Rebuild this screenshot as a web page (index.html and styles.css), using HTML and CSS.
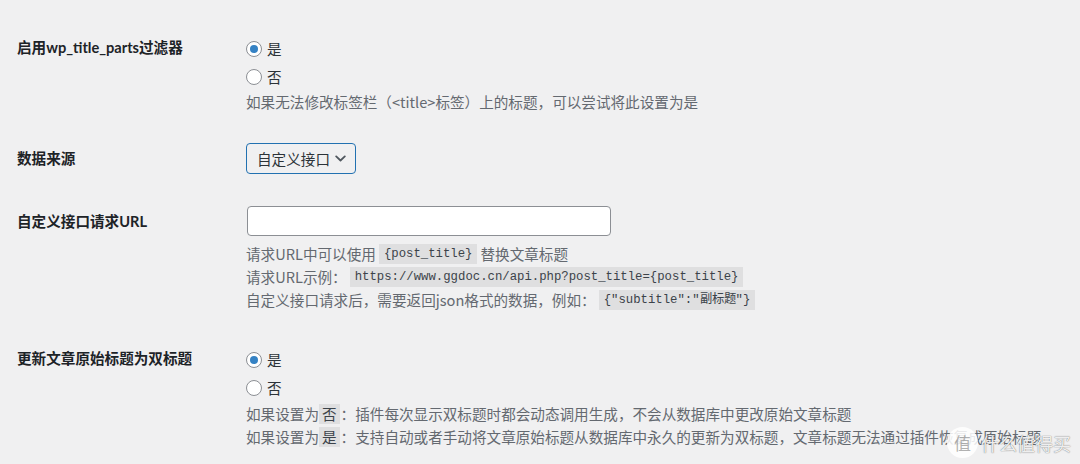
FILE: index.html
```html
<!DOCTYPE html>
<html lang="zh-CN">
<head>
<meta charset="utf-8">
<title>设置</title>
<link rel="stylesheet" href="styles.css">
</head>
<body>
<div class="form">
  <div class="row row-1">
    <div class="label">启用wp_title_parts过滤器</div>
    <div class="field">
      <label class="radio-line"><span class="radio checked"></span><span>是</span></label>
      <label class="radio-line"><span class="radio"></span><span>否</span></label>
      <p class="desc desc-first">如果无法修改标签栏（&lt;title&gt;标签）上的标题，可以尝试将此设置为是</p>
    </div>
  </div>

  <div class="row row-2">
    <div class="label label-tall">数据来源</div>
    <div class="field">
      <div class="select">
        <span>自定义接口</span>
        <svg class="chev" width="11" height="7" viewBox="0 0 11 7"><path d="M1.2 1.4 L5.5 5.5 L9.8 1.4" fill="none" stroke="#50575e" stroke-width="1.8" stroke-linecap="round" stroke-linejoin="round"/></svg>
      </div>
    </div>
  </div>

  <div class="row row-3">
    <div class="label label-tall">自定义接口请求URL</div>
    <div class="field">
      <div class="input"></div>
      <div class="descs">
        <p class="desc">请求URL中可以使用<code>{post_title}</code>替换文章标题</p>
        <p class="desc">请求URL示例：<code>https://www.ggdoc.cn/api.php?post_title={post_title}</code></p>
        <p class="desc">自定义接口请求后，需要返回json格式的数据，例如：<code>{"subtitle":"副标题"}</code></p>
      </div>
    </div>
  </div>

  <div class="row row-4">
    <div class="label">更新文章原始标题为双标题</div>
    <div class="field">
      <label class="radio-line"><span class="radio checked"></span><span>是</span></label>
      <label class="radio-line"><span class="radio"></span><span>否</span></label>
      <p class="desc">如果设置为<code class="cjk">否</code>：插件每次显示双标题时都会动态调用生成，不会从数据库中更改原始文章标题</p>
      <p class="desc">如果设置为<code class="cjk">是</code>：支持自动或者手动将文章原始标题从数据库中永久的更新为双标题，文章标题无法通过插件恢复成原始标题</p>
    </div>
  </div>
</div>

<div class="watermark">
  <span class="wm-circle">值</span><span class="wm-text">什么值得买</span>
</div>
</body>
</html>
```

FILE: styles.css
```css
html, body {
  margin: 0;
  padding: 0;
}
body {
  width: 1080px;
  height: 464px;
  overflow: hidden;
  background: #f0f0f1;
  font-family: "Noto Sans CJK SC", "Noto Sans", sans-serif;
  font-size: 14.6px;
  color: #2c3338;
  position: relative;
}
.form {
  display: flex;
  flex-direction: column;
  padding: 35px 0 0 17px;
}
.row {
  display: grid;
  grid-template-columns: 229px 1fr;
  align-items: start;
}
.row-2 {
  margin-top: 30px;
}
.row-3 {
  margin-top: 32px;
}
.row-4 {
  margin-top: 35px;
}
.label {
  font-family: "Lato", "Noto Sans CJK SC", sans-serif;
  font-weight: 700;
  color: #1d2327;
  line-height: 20px;
  padding-top: 3px;
}
.label-tall {
  padding-top: 6px;
}
.field {
  display: flex;
  flex-direction: column;
}
.radio-line {
  display: flex;
  align-items: center;
  gap: 5px;
  height: 28px;
  line-height: 28px;
}
.radio {
  width: 14px;
  height: 14px;
  border: 1px solid #8c8f94;
  border-radius: 50%;
  background: #fff;
  display: inline-flex;
  align-items: center;
  justify-content: center;
  flex: none;
}
.radio.checked::before {
  content: "";
  width: 8px;
  height: 8px;
  border-radius: 50%;
  background: #3582c4;
}
.desc {
  margin: 0;
  color: #646970;
  height: 23px;
  line-height: 23px;
  display: flex;
  align-items: center;
  white-space: nowrap;
}
.desc-first {
  margin-top: -1px;
}
code {
  font-family: "Liberation Mono", "DejaVu Sans Mono", monospace;
  font-size: 12.3px;
  line-height: 20px;
  height: 20px;
  display: inline-block;
  background: rgba(0, 0, 0, 0.07);
  color: #3c434a;
  padding: 0 5px;
  margin: 0 3px;
}
code.cjk {
  font-family: "Noto Sans CJK SC", sans-serif;
  font-size: 14.6px;
  padding: 0 3px;
  margin: 0 1px 0 0;
}
.select {
  border: 1px solid #2271b1;
  border-radius: 4px;
  display: flex;
  align-items: center;
  justify-content: space-between;
  padding: 0 9px 0 10px;
  box-sizing: border-box;
  width: 110px;
  height: 31px;
  color: #2c3338;
}
.chev {
  display: block;
}
.input {
  width: 364px;
  height: 30px;
  box-sizing: border-box;
  border: 1px solid #8c8f94;
  border-radius: 4px;
  background: #fff;
  margin-left: 1px;
}
.descs {
  margin-top: 6px;
}
.watermark {
  position: absolute;
  left: 947px;
  top: 427px;
  display: flex;
  align-items: center;
  gap: 3px;
}
.wm-circle {
  width: 31px;
  height: 31px;
  border-radius: 50%;
  background: rgba(255, 255, 255, 0.85);
  color: rgba(110, 110, 110, 0.55);
  font-size: 17px;
  display: flex;
  align-items: center;
  justify-content: center;
}
.wm-text {
  font-size: 18px;
  color: rgba(255, 255, 255, 0.9);
  text-shadow: 0 0 1px rgba(90, 90, 90, 0.7), 0 0 1px rgba(90, 90, 90, 0.5);
}
```
